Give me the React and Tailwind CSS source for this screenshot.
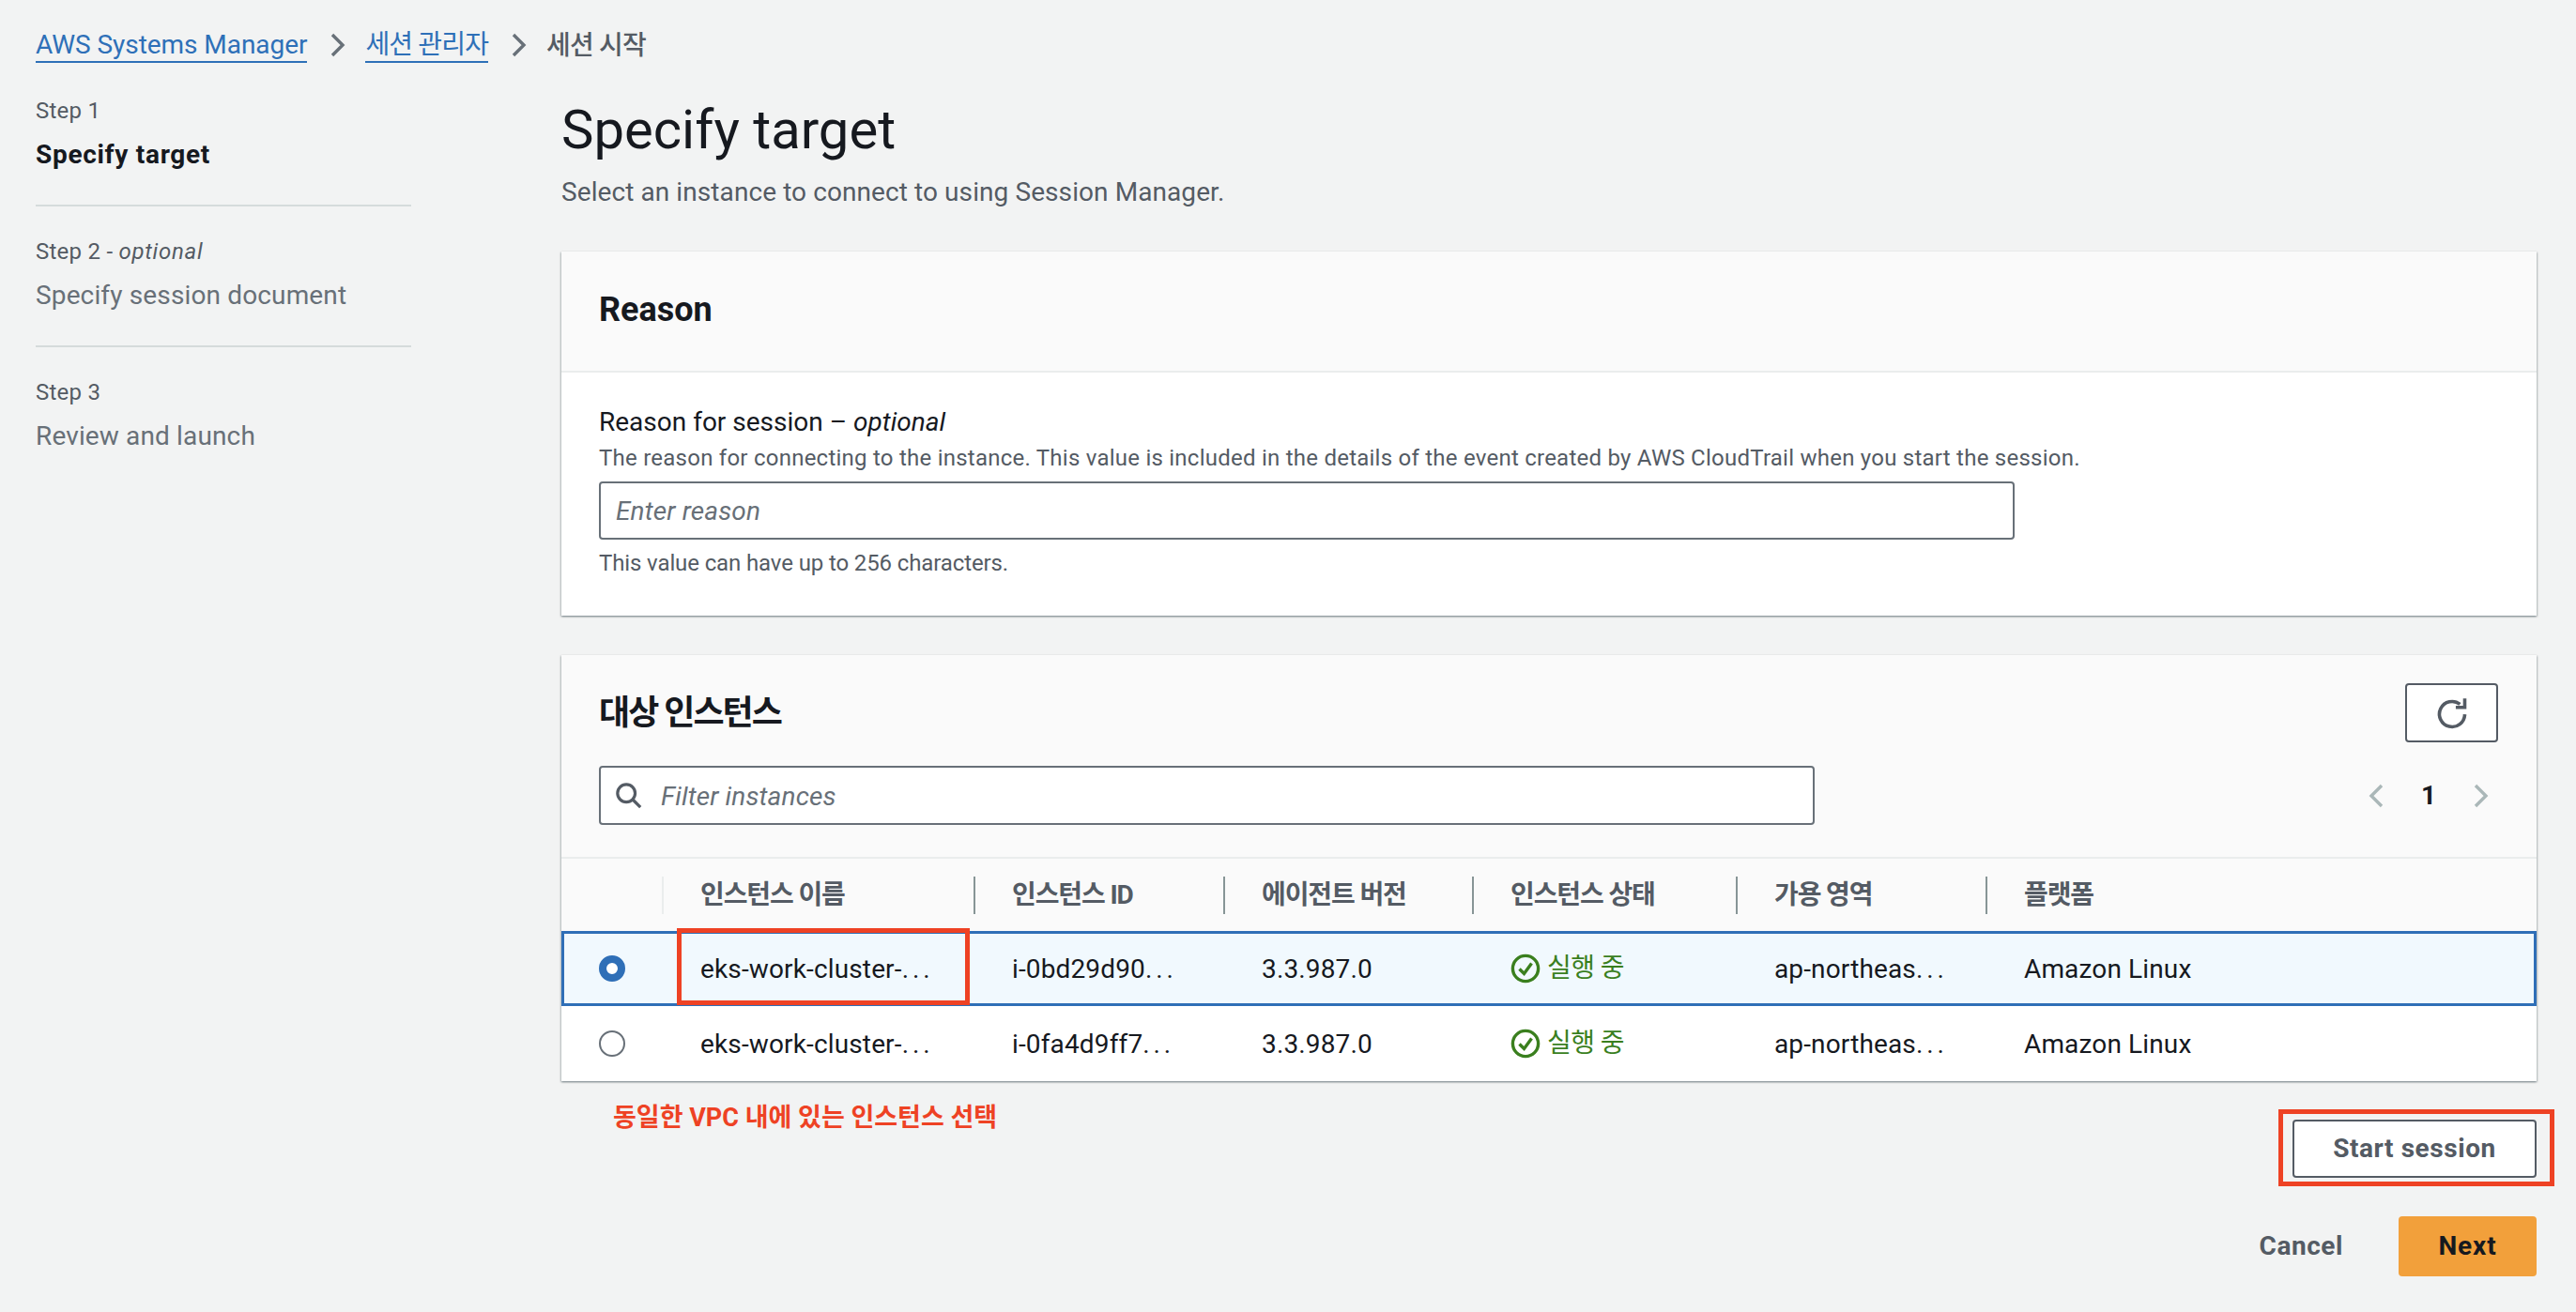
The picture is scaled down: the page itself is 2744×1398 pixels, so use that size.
import { Fragment } from "react";

const FONT = "font-['Roboto','Noto_Sans_CJK_KR',sans-serif]";

const steps = [
  { label: "Step 1", name: "Specify target", active: true },
  { label: "Step 2", optional: true, name: "Specify session document" },
  { label: "Step 3", name: "Review and launch" },
];

const columns = [
  { title: "인스턴스 이름", width: "w-[332px]" },
  { title: "인스턴스 ID", width: "w-[266px]" },
  { title: "에이전트 버전", width: "w-[265px]" },
  { title: "인스턴스 상태", width: "w-[281px]" },
  { title: "가용 영역", width: "w-[266px]" },
  { title: "플랫폼", width: "flex-1" },
];

const rows = [
  { id: "i-0bd29d90", selected: true },
  { id: "i-0fa4d9ff7", selected: false },
];

const Chevron = ({ left, className }) => (
  <svg viewBox="0 0 16 26" className={className} fill="none" stroke="currentColor" strokeWidth="3.4">
    <path d={left ? "M14 2 3 13l11 11" : "M2 2l11 11L2 24"} />
  </svg>
);

const CheckCircle = () => (
  <svg viewBox="0 0 32 32" className="w-[32px] h-[32px] text-[#3a7f1e] shrink-0" fill="none" stroke="currentColor" strokeWidth="3.4">
    <circle cx="16" cy="16" r="13.6" />
    <path d="M9.5 16.5l5 5 8-11" />
  </svg>
);

const Dots = () => <span className="tracking-[0.14em]">...</span>;

const Row = ({ id, selected }) => (
  <div className={`relative flex h-[80px] items-center border-[3px] text-[28px] text-[#16191f] ${selected ? "border-[#2f6fb7] bg-[#f1f9fe]" : "border-transparent"}`}>
    <div className="w-[104px] shrink-0 pl-[37px]">
      {selected ? (
        <div className="w-[28px] h-[28px] rounded-full border-[8px] border-[#2f6fb7] bg-white" />
      ) : (
        <div className="w-[28px] h-[28px] rounded-full border-2 border-[#687078] bg-white" />
      )}
    </div>
    <div className="w-[332px] pl-[41px] pt-[2px] whitespace-nowrap tracking-[0.005em]">eks-work-cluster-<Dots /></div>
    <div className="w-[266px] pl-[41px] pt-[2px] whitespace-nowrap tracking-[0.005em]">{id}<Dots /></div>
    <div className="w-[265px] pl-[41px] pt-[2px] tracking-[0.005em]">3.3.987.0</div>
    <div className="w-[281px] pl-[41px] flex items-center gap-[7px] text-[#3a7f1e]">
      <CheckCircle />
      <span className="tracking-[-0.02em]">실행 중</span>
    </div>
    <div className="w-[266px] pl-[41px] pt-[2px] whitespace-nowrap tracking-[0.005em]">ap-northeas<Dots /></div>
    <div className="flex-1 pl-[41px] pt-[2px] tracking-[0.005em]">Amazon Linux</div>
    {selected && (
      <div className="absolute left-[120px] top-[-6px] w-[312px] h-[82px] border-[5px] border-[#ee4224]" />
    )}
  </div>
);

export default function App() {
  return (
    <div className={`${FONT} min-h-screen bg-[#f2f3f3] pl-[38px] pr-[42px] pt-[30px] text-[#16191f]`}>
      {/* breadcrumb */}
      <div className="flex items-center h-[36px] text-[28px]">
        <a className="text-[#2e70b8] border-b-2 border-[#2e70b8] leading-[34px] pt-[1px] tracking-[-0.002em]">AWS Systems Manager</a>
        <Chevron className="w-[16px] h-[26px] ml-[25px] mr-[21px] text-[#687078]" />
        <a className="text-[#2e70b8] border-b-2 border-[#2e70b8] leading-[34px] pt-[1px] tracking-[-0.03em]">세션 관리자</a>
        <Chevron className="w-[16px] h-[26px] ml-[25px] mr-[21px] text-[#687078]" />
        <span className="text-[#545b64] font-medium tracking-[-0.03em] pt-[1px]">세션 시작</span>
      </div>

      <div className="flex items-start">
        {/* sidebar */}
        <div className="w-[400px] mt-[34px] mr-[160px] shrink-0">
          {steps.map((s, i) => (
            <Fragment key={s.label}>
              {i > 0 && <div className="h-[2px] bg-[#d5dbdb] mt-[33px] mb-[30px]" />}
              <div className="text-[24px] leading-[36px] text-[#545b64] tracking-[0.01em]">
                {s.label}
                {s.optional && <> - <i className="tracking-[0.03em]">optional</i></>}
              </div>
              <div className={`mt-[9px] text-[28px] leading-[40px] whitespace-nowrap ${s.active ? "font-bold text-[#16191f] tracking-[0.025em]" : "text-[#687078] tracking-[0.005em]"}`}>
                {s.name}
              </div>
            </Fragment>
          ))}
        </div>

        {/* main */}
        <div className="flex-1 mt-[40px] min-w-0">
          <h1 className="text-[58px] leading-[64px]">Specify target</h1>
          <p className="mt-[17px] text-[28px] leading-[36px] text-[#545b64] tracking-[0.003em]">
            Select an instance to connect to using Session Manager.
          </p>

          {/* reason card */}
          <div className="mt-[45px] bg-white shadow-[0_1px_2px_rgba(0,28,36,0.35),1px_1px_2px_rgba(0,28,36,0.15),-1px_1px_2px_rgba(0,28,36,0.15)]">
            <div className="h-[129px] bg-[#fafafa] border-b-2 border-[#eaeded] px-[40px] pb-[4px] flex items-center">
              <h2 className="text-[36px] font-bold">Reason</h2>
            </div>
            <div className="px-[40px] pt-[35px] pb-[40px]">
              <div className="text-[28px] leading-[36px]">
                Reason for session – <i>optional</i>
              </div>
              <div className="mt-[4px] text-[24px] leading-[32px] text-[#545b64] tracking-[0.01em]">
                The reason for connecting to the instance. This value is included in the details of the event created by AWS CloudTrail when you start the session.
              </div>
              <div className="mt-[9px] w-[1508px] h-[62px] bg-white border-2 border-[#687078] rounded-[4px] flex items-center px-[16px] pt-[2px] text-[28px] italic text-[#687078] tracking-[0.005em]">
                Enter reason
              </div>
              <div className="mt-[9px] text-[24px] leading-[32px] text-[#545b64] tracking-[-0.005em]">
                This value can have up to 256 characters.
              </div>
            </div>
          </div>

          {/* instances card */}
          <div className="mt-[42px] bg-white shadow-[0_1px_2px_rgba(0,28,36,0.35),1px_1px_2px_rgba(0,28,36,0.15),-1px_1px_2px_rgba(0,28,36,0.15)]">
            <div className="bg-[#fafafa] pt-[30px] pb-[34px] px-[41px] border-b-2 border-[#eaeded]">
              <div className="flex items-center justify-between">
                <h2 className="text-[36px] font-bold tracking-[-0.055em] ml-[-1px]">대상 인스턴스</h2>
                <button className="w-[99px] h-[63px] bg-white border-2 border-[#545b64] rounded-[4px] flex items-center justify-center text-[#545b64]">
                  <svg viewBox="0 0 32 32" className="w-[36px] h-[36px]" fill="none" stroke="currentColor" strokeWidth="3.2">
                    <path d="M28 17A12 12 0 1 1 23.5 7.5" />
                    <path d="M28 2V10.5H19.5" />
                  </svg>
                </button>
              </div>
              <div className="mt-[25px] flex items-center justify-between">
                <div className="w-[1295px] h-[63px] bg-white border-2 border-[#687078] rounded-[4px] flex items-center pl-[15px] text-[28px] italic text-[#687078] ml-[-1px] tracking-[0.005em]">
                  <svg viewBox="0 0 32 32" className="w-[30px] h-[30px] mr-[19px] text-[#545b64]" fill="none" stroke="currentColor" strokeWidth="3.4">
                    <circle cx="13" cy="13" r="10" />
                    <path d="M20 20l9 9" />
                  </svg>
                  <span className="pt-[2px]">Filter instances</span>
                </div>
                <div className="flex items-center mr-[10px] text-[#aab7b8]">
                  <Chevron left className="w-[16px] h-[26px]" />
                  <span className="mx-[40px] text-[28px] font-bold text-[#16191f]">1</span>
                  <Chevron className="w-[16px] h-[26px]" />
                </div>
              </div>
            </div>

            {/* table */}
            <div className="flex h-[77px] items-center bg-[#fafafa] text-[28px] font-bold text-[#545b64] tracking-[-0.04em]">
              <div className="w-[107px] shrink-0" />
              {columns.map((c, i) => (
                <div key={c.title} className={`${c.width} h-[40px] pl-[39px] flex items-center border-l-2 ${i === 0 ? "border-[#eaeded]" : "border-[#879596]"}`}>
                  {c.title}
                </div>
              ))}
            </div>
            {rows.map((r) => (
              <Row key={r.id} {...r} />
            ))}
          </div>

          {/* actions */}
          <div className="flex items-start justify-between">
            <div className="mt-[21px] ml-[55px] text-[27px] leading-[36px] font-bold text-[#ee4224]">
              동일한 VPC 내에 있는 인스턴스 선택
            </div>
            <div className="relative mt-[41px]">
              <button className="w-[260px] h-[62px] bg-white border-2 border-[#545b64] rounded-[4px] text-[28px] font-bold text-[#545b64] tracking-[0.02em]">
                Start session
              </button>
              <div className="absolute left-[-15px] top-[-11px] w-[294px] h-[82px] border-[5px] border-[#ee4224]" />
            </div>
          </div>
          <div className="mt-[41px] flex items-center justify-end">
            <button className="mr-[59px] text-[28px] font-bold text-[#545b64] tracking-[0.02em]">Cancel</button>
            <button className="w-[147px] h-[64px] bg-[#f2a03b] rounded-[4px] text-[28px] font-bold text-[#16191f] tracking-[0.03em]">Next</button>
          </div>
        </div>
      </div>
    </div>
  );
}
